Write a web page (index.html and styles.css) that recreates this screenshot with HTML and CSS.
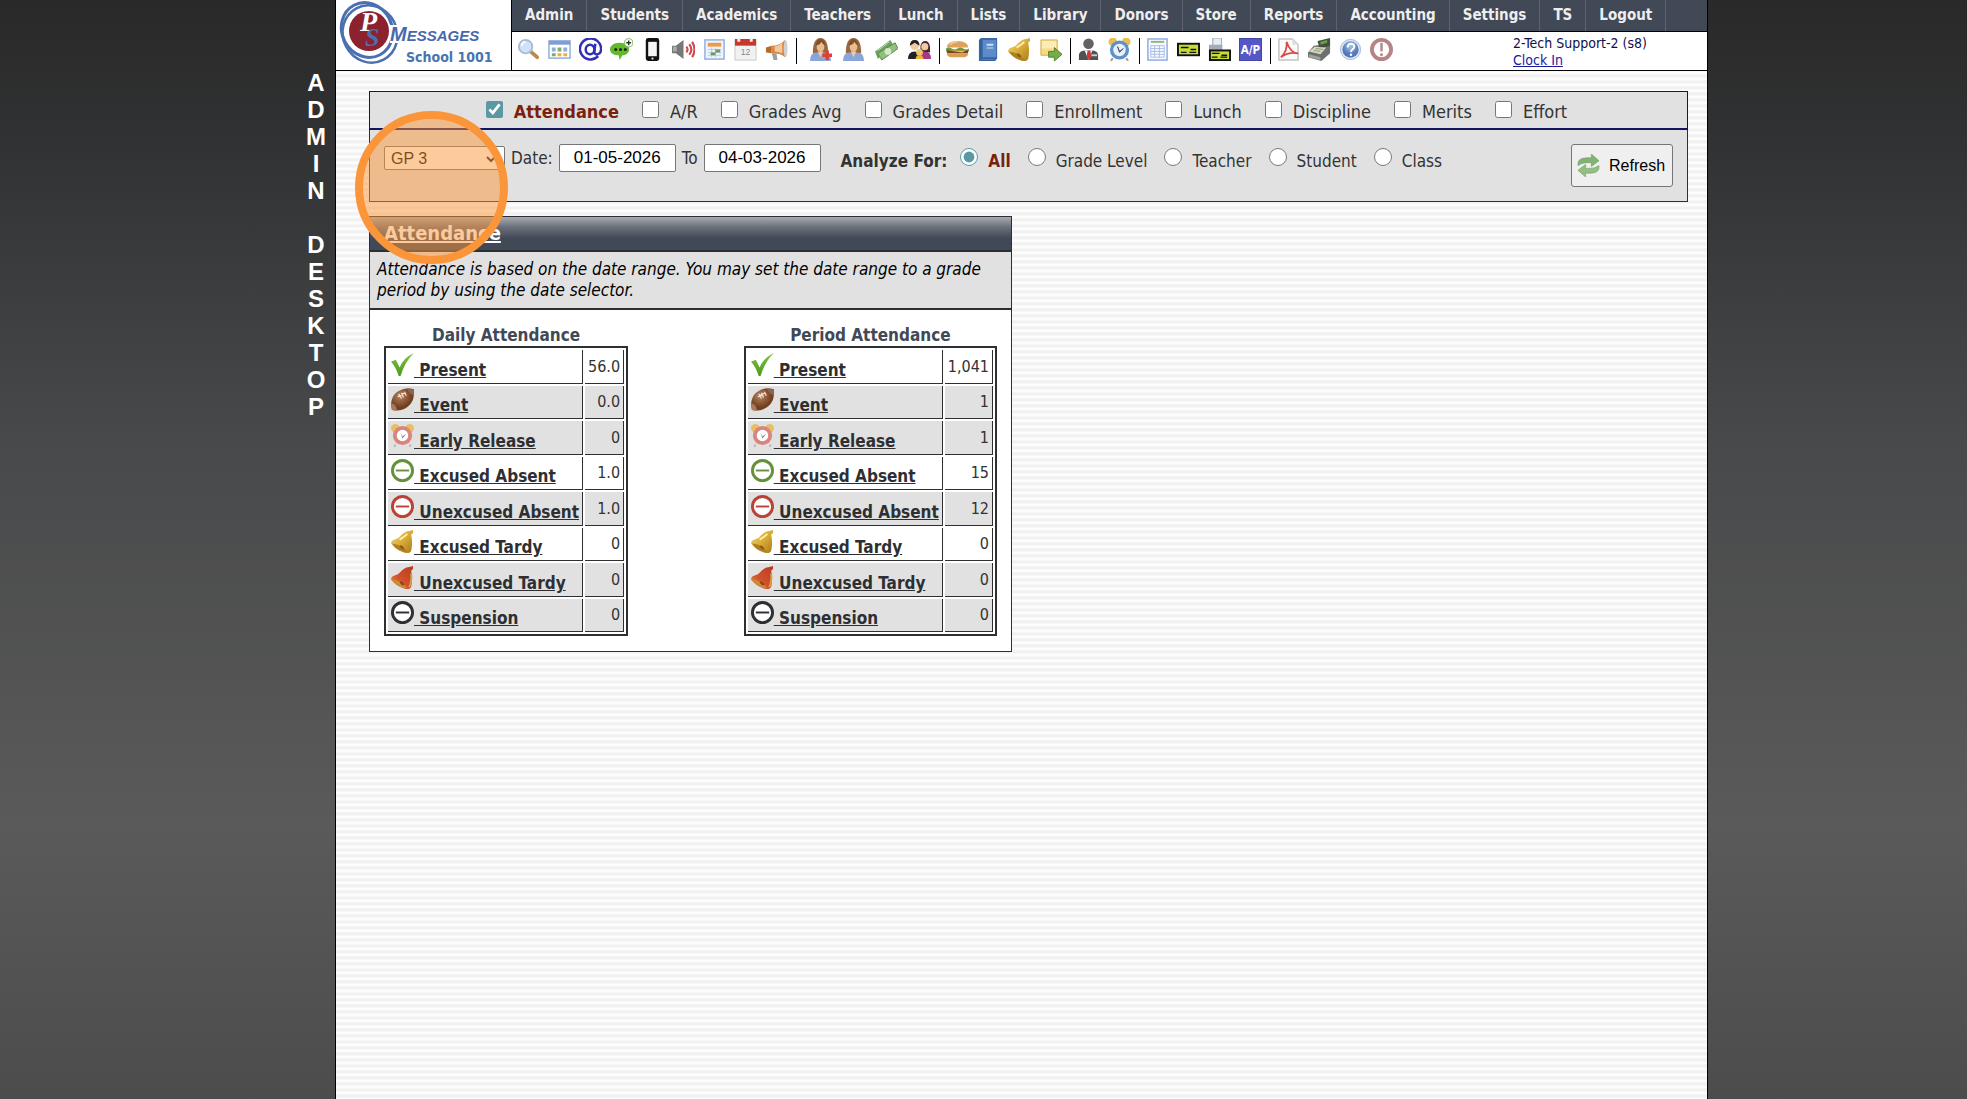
FILE: index.html
```html
<!DOCTYPE html>
<html lang="en">
<head>
  <meta charset="UTF-8" />
  <meta name="viewport" content="width=device-width, initial-scale=1.0" />
  <title>Admin Desktop</title>
  <link rel="stylesheet" href="styles.css">
</head>
<body>
  <svg class="sprite" aria-hidden="true">
    <defs>
      <linearGradient id="gold" x1="0" y1="0" x2="1" y2="1"><stop offset="0" stop-color="#f3dc7c"/><stop offset=".5" stop-color="#d9ac38"/><stop offset="1" stop-color="#a87a1c"/></linearGradient>
      <linearGradient id="redbell" x1="0" y1="1" x2="1" y2="0"><stop offset="0" stop-color="#e0a23c"/><stop offset=".4" stop-color="#d2542c"/><stop offset="1" stop-color="#bb3a22"/></linearGradient>
      <linearGradient id="green" x1="0" y1="0" x2="0" y2="1"><stop offset="0" stop-color="#7fc241"/><stop offset="1" stop-color="#4d9a1c"/></linearGradient>
      <radialGradient id="ball" cx=".4" cy=".35"><stop offset="0" stop-color="#b98360"/><stop offset="1" stop-color="#70401f"/></radialGradient>
      <radialGradient id="blueball" cx=".5" cy=".3"><stop offset="0" stop-color="#a9c3ec"/><stop offset="1" stop-color="#5378b8"/></radialGradient>

      <symbol id="i-search" viewBox="0 0 24 24"><path d="M14 14l7 6" stroke="#b98a4c" stroke-width="4" stroke-linecap="round"/><circle cx="9" cy="9" r="7" fill="#cfe2f7" stroke="#a9bcdc" stroke-width="2"/><path d="M5 8a4 4 0 0 1 4-4" stroke="#fff" stroke-width="2" fill="none"/></symbol>
      <symbol id="i-grid" viewBox="0 0 24 24"><rect x="1" y="3" width="22" height="18" fill="#fff" stroke="#8fabd8" stroke-width="1.5"/><path d="M1 3h22v4H1z" fill="#7e9fd6"/><path d="M4 10h4v4H4zM16 10h4v4h-4z" fill="#8eb0d8"/><path d="M10 10h4v4h-4zM4 16h4v3H4z" fill="#80ad68"/><path d="M10 16h4v3h-4zM16 16h4v3h-4z" fill="#efad42"/></symbol>
      <symbol id="i-at" viewBox="0 0 24 24"><g fill="none" stroke="#3430b5" stroke-width="2.6"><path d="M20 19A11 11 0 1 1 23 12c0 5-6 7-7 3l1-9"/><ellipse cx="11.500" cy="12" rx="4.500" ry="5"/></g></symbol>
      <symbol id="i-chat" viewBox="0 0 24 24"><path d="M10 5c6 0 10 3 10 7s-4 6-7 6l-3 5-1-5c-5 0-9-2-9-6s4-7 10-7z" fill="#62b92b"/><g fill="#222"><circle cx="6" cy="12" r="1.600"/><circle cx="11" cy="12" r="1.600"/><circle cx="16" cy="12" r="1.600"/></g><circle cx="19.500" cy="5" r="4.300" fill="#fff" stroke="#79b65b"/><path d="M19.500 2.500v5M17 5h5" stroke="#333" stroke-width="1.400"/></symbol>
      <symbol id="i-phone" viewBox="0 0 24 24"><rect x="5" y="0" width="14" height="24" rx="2.500" fill="#111"/><path d="M7.500 4h9v15h-9z" fill="#f4f4f4"/><circle cx="12" cy="21.500" r="1.200" fill="#ddd"/></symbol>
      <symbol id="i-sound" viewBox="0 0 24 24"><path d="M0 8h4l8-6v20l-8-6H0z" fill="#777"/><path d="M1 9h4v5H1z" fill="#aaa"/><g fill="none" stroke="#d1464c" stroke-width="2.200"><path d="M15 9q2.500 3 0 6M18 6.500q4.500 5.500 0 11M21 4q5 8 0 16"/></g></symbol>
      <symbol id="i-sheet" viewBox="0 0 24 24"><rect x="2" y="2" width="20" height="20" fill="#eef4fd" stroke="#91addb" stroke-width="1.500"/><path d="M5 5h14v4H5z" fill="#ed9b48"/><path d="M5 12h14M5 15h14M5 18h14M9 10v10M13 10v10" stroke="#b6cbe8"/><path d="M13 12h5v3h-5zM8 15h5v3H8z" fill="#6b9c5a"/></symbol>
      <symbol id="i-calendar" viewBox="0 0 24 24"><rect x="1" y="2" width="22" height="21" fill="#f1f1f1" stroke="#c8c8c8"/><path d="M1 1h22v7H1z" fill="#c6382d"/><path d="M5 0v4M18 0v4" stroke="#eee" stroke-width="3"/><text x="12" y="18" text-anchor="middle" class="ico-date">12</text></symbol>
      <symbol id="i-horn" viewBox="0 0 24 24"><path d="M1 10l6-2v8l-6-1z" fill="#b46b30"/><path d="M7 8C13 8 17 6 21 2v18c-4-3-8-4-14-4z" fill="#d98544"/><path d="M10 9q5-1 8-4v11q-4-2-8-2z" fill="#f2ca9e"/><ellipse cx="21.500" cy="11" rx="2" ry="9" fill="#cfd0d2"/><path d="M7 16h5l1 7H9z" fill="#9c9ea3"/></symbol>
      <symbol id="i-person" viewBox="0 0 24 24"><path d="M4 16Q4 0 12 0t8 16z" fill="#99683d"/><path d="M1 24q0-9 7-9h8q7 0 7 9z" fill="#89a5d9"/><path d="M9 14h6l-3 6z" fill="#f2c9a2"/><ellipse cx="12" cy="9" rx="4" ry="5.500" fill="#e9bd92"/><path d="M7 8q5-1 6-4 1 3 4 4-1-7-5-7T7 8z" fill="#80512b"/></symbol>
      <symbol id="i-person-add" viewBox="0 0 24 24"><use href="#i-person"/><path d="M19 13v10M14 18h10" stroke="#df3f35" stroke-width="3.500"/></symbol>
      <symbol id="i-cash" viewBox="0 0 24 24"><path d="M0 14L16 2l3 5L3 22z" fill="#6da35b"/><path d="M3 16L21 5l3 6L7 23z" fill="#91bf7d" stroke="#568b48"/><circle cx="13.500" cy="14" r="3.500" fill="#d5e8c7"/><path d="M3 13L15 4" stroke="#c7dfba"/></symbol>
      <symbol id="i-family" viewBox="0 0 24 24"><path d="M0 22q0-8 7-8 5 0 7 8z" fill="#232323"/><path d="M12 22q0-8 6-8t6 8z" fill="#a8368a"/><circle cx="7" cy="8" r="4.500" fill="#f1cba4"/><path d="M2 8Q2 2 7 2t5 6L7 5z" fill="#24211f"/><path d="M13 14V8q1-5 5-5t5 6v6z" fill="#4a2926"/><circle cx="17.500" cy="9" r="3.700" fill="#f1cba4"/><circle cx="12" cy="15" r="3.500" fill="#eec16d"/><path d="M8 22q0-4 4-4t4 4z" fill="#edb43d"/></symbol>
      <symbol id="i-burger" viewBox="0 0 24 24"><path d="M1 10q0-7 11-7t11 7z" fill="#dca15a"/><path d="M4 7q3-3 8-3" stroke="#f2cc91" stroke-width="1.500" fill="none"/><path d="M0 11q3-2 6 0t6 0 6 0 6 0v3H0z" fill="#6d9a38"/><path d="M1 13h22v3H1z" fill="#7b4525"/><path d="M3 13h18l-4 2z" fill="#efc345"/><path d="M1 16h22q0 4-4 4H5q-4 0-4-4z" fill="#d99c55"/></symbol>
      <symbol id="i-book" viewBox="0 0 24 24"><path d="M2 2l2-2h17v21l-2 3H2z" fill="#3a69aa"/><path d="M6 2h14v18H6z" fill="#5c8bc8"/><path d="M4 22h15v1H4zM4 3v18" fill="#fff" stroke="#2b568e"/><path d="M10 6h7v2h-7zM10 10h7v1h-7z" fill="#c7dff4"/></symbol>
      <symbol id="i-bell" viewBox="0 0 24 24"><path d="M23 0v3l-2 2q2 8 0 17-2 3-6 2Q5 21 0 14q0-3 4-4 4-1 7-5 4-4 8-4z" fill="url(#gold)"/><path d="M1 14q10 1 16 9-10 0-16-9z" fill="#ad7e23"/><path d="M9 16q4 0 5 4-4 1-5-4z" fill="#8b5c17"/><path d="M9 10q5-3 8-6" stroke="#fff0a8" stroke-width="2" fill="none"/></symbol>
      <symbol id="i-bell-red" viewBox="0 0 24 24"><path d="M23 0v3l-2 2q2 8 0 17-2 3-6 2Q5 21 0 14q0-3 4-4 4-1 7-5 4-4 8-4z" fill="url(#redbell)"/><path d="M1 14q10 1 16 9-10 0-16-9z" fill="#c98d3a"/><path d="M9 16q4 0 5 4-4 1-5-4z" fill="#8b4517"/><path d="M21 8q1 8-2 14" stroke="#d5a04a" stroke-width="2" fill="none"/></symbol>
      <symbol id="i-note" viewBox="0 0 24 24"><path d="M2 2h17v16H2z" fill="#f6da82" stroke="#d5ac47"/><path d="M3 3h15v8H3z" fill="#fbedb5"/><path d="M10 14h6v-4l8 7-8 7v-4h-6z" fill="#75ad4a" stroke="#4d842b"/></symbol>
      <symbol id="i-suit" viewBox="0 0 24 24"><path d="M2 23v-5q0-5 7-5h6q7 0 7 5v5z" fill="#505155"/><circle cx="12" cy="6" r="5.500" fill="#626367"/><path d="M8 13h8l-4 10z" fill="#fff"/><path d="M11 13h3l1 7-2 3-3-3z" fill="#c53b39"/><path d="M15 17h6v2h-6z" fill="#ccc"/></symbol>
      <symbol id="i-clock" viewBox="0 0 24 24"><path d="M5 21l-2 3M19 21l2 3" stroke="#999" stroke-width="2"/><circle cx="5" cy="4" r="4.500" fill="#e6c053"/><circle cx="19" cy="4" r="4.500" fill="#e6c053"/><circle cx="12" cy="12.500" r="10" fill="#5e91c9"/><circle cx="12" cy="12.500" r="6.500" fill="#e8f2fc"/><path d="M10 9l2 5 4-3-4 4z" fill="#4b5872" stroke="#4b5872"/></symbol>
      <symbol id="i-clock-red" viewBox="0 0 24 24"><path d="M4 21v3M20 21v3" stroke="#bbb" stroke-width="2"/><circle cx="4.500" cy="4.500" r="4.500" fill="#e7c065"/><circle cx="19.500" cy="4.500" r="4.500" fill="#e7c065"/><circle cx="12" cy="12" r="10" fill="#d9847c"/><circle cx="12" cy="12" r="6" fill="#fff"/><path d="M10 9l2 4 4-3-4 5z" fill="#6d7d91"/></symbol>
      <symbol id="i-list" viewBox="0 0 24 24"><rect x="2" y="1" width="20" height="22" fill="#f7faff" stroke="#8fa9e0" stroke-width="1.500"/><path d="M5 4h14" stroke="#8bb67c" stroke-width="2"/><path d="M5 8h14v12H5zM5 11h14M5 14h14M5 17h14M9 8v12M14 8v12" fill="none" stroke="#a8bce5"/></symbol>
      <symbol id="i-check" viewBox="0 0 24 24"><rect x="1" y="6" width="22" height="12" fill="#c8dc38" stroke="#111" stroke-width="2"/><path d="M4 10h8M14 12h6M4 15h6M13 15h7" stroke="#111" stroke-width="1.500"/></symbol>
      <symbol id="i-check-print" viewBox="0 0 24 24"><path d="M5 0h9v8H5z" fill="#e8eef5" stroke="#9ba5b1"/><path d="M1 7h14v8H1z" fill="#a5acb4"/><rect x="2" y="13" width="21" height="10" fill="#c8dc38" stroke="#111" stroke-width="2"/><path d="M4 16h8M14 18h6M4 20h6M13 20h7" stroke="#111" stroke-width="1.400"/></symbol>
      <symbol id="i-ap" viewBox="0 0 24 24"><rect x="0" y="0" width="24" height="24" fill="#5557c6"/><rect x=".5" y=".5" width="23" height="23" fill="none" stroke="#4547a5"/><text x="12" y="17" text-anchor="middle" class="ico-ap">A/P</text></symbol>
      <symbol id="i-pdf" viewBox="0 0 24 24"><path d="M2 1h14l6 6v16H2z" fill="#fafafa" stroke="#c3c3c3" stroke-width="1.500"/><path d="M16 1v6h6" fill="#ddd"/><path d="M4 20Q11 14 10 4q4 12 12 12-9-2-18 4z" fill="none" stroke="#d64a43" stroke-width="1.800"/></symbol>
      <symbol id="i-register" viewBox="0 0 24 24"><path d="M0 15l6-7 17-2v10l-9 8-14-4z" fill="#6d716b"/><path d="M10 3l13-3v8l-11 3z" fill="#444f41"/><path d="M13 4l7-2v3l-7 2z" fill="#68a13d"/><path d="M1 14l6-5 12 1-6 7z" fill="#d6d7c4"/><path d="M6 13l7 1M8 11l8 1" stroke="#8a9870"/><path d="M1 17l12 3v3L1 20z" fill="#a0a39b"/></symbol>
      <symbol id="i-help" viewBox="0 0 24 24"><circle cx="12" cy="12" r="10.500" fill="#dfe9f7" stroke="#9bb4da"/><circle cx="12" cy="12" r="8.500" fill="url(#blueball)"/><path d="M9 10q0-4 3.500-4t3.500 3c0 3-3.500 2.500-3.500 5.500" stroke="#fff" stroke-width="2" fill="none"/><circle cx="12.500" cy="17.500" r="1.300" fill="#fff"/></symbol>
      <symbol id="i-alert" viewBox="0 0 24 24"><circle cx="12" cy="12" r="10" fill="#fff" stroke="#b78486" stroke-width="4"/><path d="M12 5v9" stroke="#b78486" stroke-width="2.500"/><circle cx="12" cy="17.500" r="1.500" fill="#b78486"/></symbol>

      <symbol id="i-present" viewBox="0 0 24 24"><path d="M0 9l5-2 4 8Q13 5 24 0 15 8 10 24H8Q5 14 0 9z" fill="url(#green)"/></symbol>
      <symbol id="i-football" viewBox="0 0 24 24"><path d="M0 17Q1 6 8 3 15-1 23 1q3 11-5 18-7 6-17 4z" fill="url(#ball)"/><path d="M0 16q6 1 6 8l-5-1z" fill="#a97a61"/><path d="M17 1q1 5 7 7V1z" fill="#8b6452"/><path d="M7 9l8-4M8 6l3 5M11 5l2 5M14 4l2 4" stroke="#efe3da" stroke-width="1.300"/></symbol>
      <symbol id="i-minus" viewBox="0 0 24 24"><circle cx="12" cy="12" r="10.500" fill="#fff" stroke="currentColor" stroke-width="3"/><path d="M5 12h14" stroke="currentColor" stroke-width="2"/></symbol>
      <symbol id="i-refresh" viewBox="0 0 24 24"><path d="M1 12q-1-8 9-8h5V0l8 7-8 6V9h-5q-5 0-9 3z" fill="#82b374" stroke="#6a9d5d" stroke-width=".6"/><path d="M23 12q1 8-9 8H9v4l-8-7 8-6v4h5q5 0 9-3z" fill="#93bf82" stroke="#6a9d5d" stroke-width=".6"/></symbol>
    </defs>
  </svg>

  <div class="shell">
    <div class="side-title">A<br>D<br>M<br>I<br>N<br><br>D<br>E<br>S<br>K<br>T<br>O<br>P</div>

    <div class="page">
      <header class="header">
        <div class="logo">
          <svg width="174" height="70" viewBox="0 0 174 70" role="img" aria-label="Messages">
            <g fill="none" stroke="#4a70b2">
              <ellipse cx="31" cy="30" rx="25" ry="28" stroke-width="3" transform="rotate(-28 31 30)"/>
              <ellipse cx="34" cy="34" rx="27" ry="29" stroke-width="2.500" transform="rotate(-28 34 34)"/>
            </g>
            <path d="M54 25h12v18H54z" fill="#fff"/>
            <circle cx="33" cy="31" r="20" fill="#8b222e"/>
            <text x="24" y="31" class="logo-p">P<tspan x="29" y="46" class="logo-s">S</tspan></text>
            <text x="54" y="41" class="logo-name">M<tspan class="logo-small">ESSAGES</tspan></text>
            <text x="70" y="62" class="logo-school">School 1001</text>
          </svg>
        </div>
        <div class="header-main">
          <nav class="menu">
            <a href="#">Admin</a>
            <a href="#">Students</a>
            <a href="#">Academics</a>
            <a href="#">Teachers</a>
            <a href="#">Lunch</a>
            <a href="#">Lists</a>
            <a href="#">Library</a>
            <a href="#">Donors</a>
            <a href="#">Store</a>
            <a href="#">Reports</a>
            <a href="#">Accounting</a>
            <a href="#">Settings</a>
            <a href="#">TS</a>
            <a href="#">Logout</a>
          </nav>
          <div class="toolbar">
            <div class="tools">
              <svg class="icon"><use href="#i-search"/></svg>
              <svg class="icon"><use href="#i-grid"/></svg>
              <svg class="icon"><use href="#i-at"/></svg>
              <svg class="icon"><use href="#i-chat"/></svg>
              <svg class="icon"><use href="#i-phone"/></svg>
              <svg class="icon"><use href="#i-sound"/></svg>
              <svg class="icon"><use href="#i-sheet"/></svg>
              <svg class="icon"><use href="#i-calendar"/></svg>
              <svg class="icon"><use href="#i-horn"/></svg>
            </div>
            <div class="tools people">
              <svg class="icon"><use href="#i-person-add"/></svg>
              <svg class="icon"><use href="#i-person"/></svg>
              <svg class="icon"><use href="#i-cash"/></svg>
              <svg class="icon"><use href="#i-family"/></svg>
            </div>
            <div class="tools">
              <svg class="icon"><use href="#i-burger"/></svg>
              <svg class="icon"><use href="#i-book"/></svg>
              <svg class="icon"><use href="#i-bell"/></svg>
              <svg class="icon"><use href="#i-note"/></svg>
            </div>
            <div class="tools">
              <svg class="icon"><use href="#i-suit"/></svg>
              <svg class="icon"><use href="#i-clock"/></svg>
            </div>
            <div class="tools">
              <svg class="icon"><use href="#i-list"/></svg>
              <svg class="icon"><use href="#i-check"/></svg>
              <svg class="icon"><use href="#i-check-print"/></svg>
              <svg class="icon"><use href="#i-ap"/></svg>
            </div>
            <div class="tools">
              <svg class="icon"><use href="#i-pdf"/></svg>
              <svg class="icon"><use href="#i-register"/></svg>
              <svg class="icon"><use href="#i-help"/></svg>
              <svg class="icon"><use href="#i-alert"/></svg>
            </div>
            <div class="user">
              <div>2-Tech Support-2 (s8)</div>
              <a href="#">Clock In</a>
            </div>
          </div>
        </div>
      </header>

      <main class="content">
        <form class="filters">
          <div class="reports">
            <label class="on"><input type="checkbox" checked><span>Attendance</span></label>
            <label><input type="checkbox"><span>A/R</span></label>
            <label><input type="checkbox"><span>Grades Avg</span></label>
            <label><input type="checkbox"><span>Grades Detail</span></label>
            <label><input type="checkbox"><span>Enrollment</span></label>
            <label><input type="checkbox"><span>Lunch</span></label>
            <label><input type="checkbox"><span>Discipline</span></label>
            <label><input type="checkbox"><span>Merits</span></label>
            <label><input type="checkbox"><span>Effort</span></label>
          </div>
          <div class="options">
            <div class="dates">
              <div class="period">
                <select aria-label="Grade period"><option>GP 3</option></select>
                <svg class="chevron" viewBox="0 0 10 8"><path d="M1 2l4 4 4-4" fill="none" stroke="#222" stroke-width="2"/></svg>
              </div>
              <label for="from">Date:</label>
              <input type="text" id="from" value="01-05-2026">
              <label for="to">To</label>
              <input type="text" id="to" value="04-03-2026">
            </div>
            <div class="analyze">
              <b>Analyze For:</b>
              <label class="on"><input type="radio" name="by" checked><span>All</span></label>
              <label><input type="radio" name="by"><span>Grade Level</span></label>
              <label><input type="radio" name="by"><span>Teacher</span></label>
              <label><input type="radio" name="by"><span>Student</span></label>
              <label><input type="radio" name="by"><span>Class</span></label>
            </div>
            <button type="button" class="refresh"><svg class="icon"><use href="#i-refresh"/></svg>Refresh</button>
          </div>
          <div class="click-marker"></div>
        </form>

        <section class="panel">
          <h2><a href="#">Attendance</a></h2>
          <p class="note">Attendance is based on the date range. You may set the date range to a grade period by using the date selector.</p>
          <div class="tables">
            <table>
              <caption>Daily Attendance</caption>
              <tr><td><a href="#"><svg class="icon"><use href="#i-present"/></svg> Present</a></td><td>56.0</td></tr>
              <tr class="alt"><td><a href="#"><svg class="icon"><use href="#i-football"/></svg> Event</a></td><td>0.0</td></tr>
              <tr class="alt"><td><a href="#"><svg class="icon"><use href="#i-clock-red"/></svg> Early Release</a></td><td>0</td></tr>
              <tr><td><a href="#"><svg class="icon excused"><use href="#i-minus"/></svg> Excused Absent</a></td><td>1.0</td></tr>
              <tr class="alt"><td><a href="#"><svg class="icon unexcused"><use href="#i-minus"/></svg> Unexcused Absent</a></td><td>1.0</td></tr>
              <tr><td><a href="#"><svg class="icon"><use href="#i-bell"/></svg> Excused Tardy</a></td><td>0</td></tr>
              <tr class="alt"><td><a href="#"><svg class="icon"><use href="#i-bell-red"/></svg> Unexcused Tardy</a></td><td>0</td></tr>
              <tr class="alt"><td><a href="#"><svg class="icon"><use href="#i-minus"/></svg> Suspension</a></td><td>0</td></tr>
            </table>
            <table>
              <caption>Period Attendance</caption>
              <tr><td><a href="#"><svg class="icon"><use href="#i-present"/></svg> Present</a></td><td>1,041</td></tr>
              <tr class="alt"><td><a href="#"><svg class="icon"><use href="#i-football"/></svg> Event</a></td><td>1</td></tr>
              <tr class="alt"><td><a href="#"><svg class="icon"><use href="#i-clock-red"/></svg> Early Release</a></td><td>1</td></tr>
              <tr><td><a href="#"><svg class="icon excused"><use href="#i-minus"/></svg> Excused Absent</a></td><td>15</td></tr>
              <tr class="alt"><td><a href="#"><svg class="icon unexcused"><use href="#i-minus"/></svg> Unexcused Absent</a></td><td>12</td></tr>
              <tr><td><a href="#"><svg class="icon"><use href="#i-bell"/></svg> Excused Tardy</a></td><td>0</td></tr>
              <tr class="alt"><td><a href="#"><svg class="icon"><use href="#i-bell-red"/></svg> Unexcused Tardy</a></td><td>0</td></tr>
              <tr class="alt"><td><a href="#"><svg class="icon"><use href="#i-minus"/></svg> Suspension</a></td><td>0</td></tr>
            </table>
          </div>
        </section>
      </main>
    </div>
  </div>
</body>
</html>
```
FILE: styles.css
```css
:root {
  --slate: #414856;
  --line: #2e2f32;
  --navy: #14145a;
  --gray: #e1e1e1;
  --text: #333;
  --maroon: #7b1f0e;
  --marker: #fb953a;
}

* {
  box-sizing: border-box;
}

body {
  margin: 0;
  font-family: Tahoma, "DejaVu Sans Condensed", "DejaVu Sans", sans-serif;
  font-size: 16px;
  color: var(--text);
  background: linear-gradient(#292929, #303132 12%, #48494a 40%, #5a5a5a 75%, #4c4c4c);
}

.sprite {
  position: absolute;
  width: 0;
  height: 0;
}

.icon {
  width: 23px;
  height: 23px;
  flex: none;
}

.ico-date { font: 9px "Liberation Sans", sans-serif; fill: #888; }
.ico-ap { font: bold 12px "DejaVu Sans Condensed", sans-serif; fill: #fff; }

.shell {
  display: flex;
  justify-content: center;
  min-height: 100vh;
}

.side-title {
  width: 76px;
  padding: 69px 0 0 38px;
  text-align: center;
  font: bold 24px/27px Arial, "Liberation Sans", sans-serif;
  color: #fff;
}

.page {
  flex: 1;
  max-width: 1373px;
  border: solid #000;
  border-width: 0 1px;
  background: repeating-linear-gradient(#fff 0, #fafafa 2px, #f1f1f1 3px, #f1f1f1 5px, #fff 6px);
}

/* header */

.header {
  display: flex;
  background: #fff;
  border-bottom: 1px solid #000;
}

.logo {
  width: 176px;
  border-right: 1px solid #000;
}

.logo svg { display: block; }
.logo-p { font: italic bold 28px "Liberation Serif", serif; fill: #fff; }
.logo-s { font-size: 26px; fill: #4a70b2; }
.logo-name { font: italic bold 20px "Liberation Sans", sans-serif; fill: #4768ad; }
.logo-small { font-size: 15px; }
.logo-school { font: bold 14px Tahoma, "DejaVu Sans Condensed", sans-serif; fill: #4674b0; }

.header-main {
  flex: 1;
}

.menu {
  display: flex;
  height: 32px;
  background: var(--slate);
  border-bottom: 1px solid #000;
}

.menu a {
  padding: 0 13px;
  border-right: 1px solid #5d6470;
  font-size: 15px;
  font-weight: bold;
  line-height: 31px;
  color: #eee;
  text-decoration: none;
}

.toolbar {
  display: flex;
  align-items: flex-start;
  padding: 6px 0 0 5px;
}

.tools {
  display: flex;
  gap: 8px;
  height: 26px;
}

.tools + .tools {
  margin-left: 8px;
  padding-left: 6px;
  border-left: 1px solid #000;
}

.tools + .people {
  gap: 10px;
  padding-left: 12px;
}

.user {
  margin: -3px 60px 0 auto;
  font-size: 14px;
  line-height: 17px;
  color: #10104c;
}

.user a {
  color: #1a1a9c;
}

/* filters */

.content {
  padding: 20px 19px 0 33px;
}

.filters {
  position: relative;
  background: var(--gray);
  border: 1px solid var(--line);
}

.reports {
  display: flex;
  justify-content: center;
  gap: 23px;
  height: 39px;
  margin: -1px -1px 0;
  padding: 9px 4px 0 0;
  border: 1px solid var(--navy);
  border-bottom-width: 2px;
  font-size: 18px;
}

.filters input[type="checkbox"],
.filters input[type="radio"] {
  flex: none;
  margin: 0;
  accent-color: #5a98a3;
}

.reports label,
.analyze label {
  display: flex;
  align-items: flex-start;
  gap: 11px;
}

.reports input {
  width: 17px;
  height: 17px;
}

.on {
  font-weight: bold;
  color: var(--maroon);
}

.options {
  display: flex;
  align-items: flex-start;
  padding: 14px;
  font-size: 17px;
}

.dates {
  display: flex;
  align-items: center;
  gap: 6px;
}

.period {
  position: relative;
}

.dates select {
  display: block;
  width: 121px;
  height: 24px;
  padding: 0 6px;
  appearance: none;
  border: 1px solid #767676;
  border-radius: 2px;
  background: #fff;
  color: #000;
  font: 16px Arial, "Liberation Sans", sans-serif;
}

.chevron {
  position: absolute;
  right: 9px;
  top: 9px;
  width: 10px;
  height: 8px;
  pointer-events: none;
}

.dates input {
  width: 117px;
  height: 28px;
  border: 1px solid #767676;
  border-radius: 2px;
  text-align: center;
  font: 17px Arial, "Liberation Sans", sans-serif;
}

.analyze {
  display: flex;
  gap: 17px;
  padding: 4px 0 0 20px;
  line-height: 26px;
}

.analyze b {
  margin-right: -4px;
}

.analyze label {
  gap: 10px;
}

.analyze input {
  width: 18px;
  height: 18px;
}

.refresh {
  display: flex;
  align-items: center;
  gap: 9px;
  width: 102px;
  height: 43px;
  margin-left: auto;
  padding: 0 5px;
  border: 1px solid #767676;
  border-radius: 3px;
  background: #efefef;
  color: #000;
  font: 16px Arial, "Liberation Sans", sans-serif;
}

.click-marker {
  position: absolute;
  left: -15px;
  top: 19px;
  width: 153px;
  height: 153px;
  border: 8px solid var(--marker);
  border-radius: 50%;
  background: rgba(251, 149, 58, 0.5);
  pointer-events: none;
}

/* attendance */

.panel {
  width: 643px;
  margin-top: 14px;
  border: 1px solid var(--line);
  background: #fff;
}

.panel h2 {
  margin: 0;
  padding: 0 14px;
  font-size: 20px;
  line-height: 33px;
  background: linear-gradient(#a7abb1, #6b717c 30%, var(--slate) 65%);
  border-bottom: 2px solid var(--line);
}

.panel h2 a {
  color: #fff;
}

.note {
  margin: 0;
  padding: 7px;
  font-size: 17px;
  line-height: 21px;
  font-style: italic;
  color: #000;
  background: var(--gray);
  border-bottom: 2px solid var(--line);
}

.tables {
  display: flex;
  justify-content: space-between;
  padding: 15px 14px;
}

table {
  height: 290px;
  border: 2px solid var(--line);
  border-spacing: 2px;
}

caption {
  font-size: 17px;
  font-weight: bold;
  line-height: 21px;
  color: var(--slate);
}

td {
  padding: 1px 3px;
  border: solid var(--line);
  border-width: 0 1px 1px 0;
  text-align: right;
}

td:first-child {
  text-align: left;
  font-size: 17px;
  font-weight: bold;
}

td a {
  color: var(--line);
}

.alt td {
  background: var(--gray);
}

.excused { color: #65913c; }
.unexcused { color: #b84334; }
```
